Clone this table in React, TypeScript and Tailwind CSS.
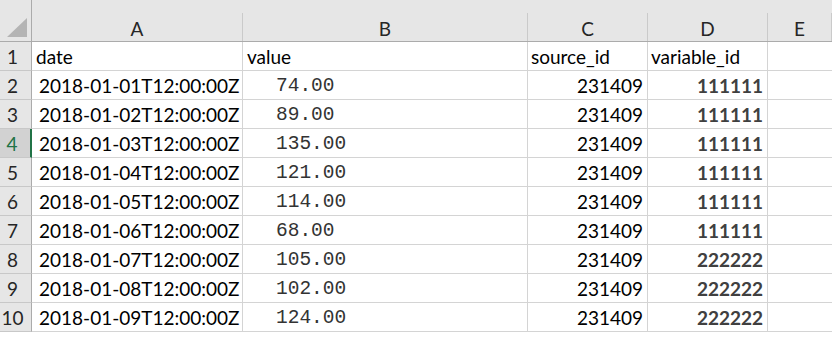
import React from 'react'

type Row = { date: string; value: string; source: string; variable: string }

const rows: Row[] = [
  { date: '2018-01-01T12:00:00Z', value: '74.00', source: '231409', variable: '111111' },
  { date: '2018-01-02T12:00:00Z', value: '89.00', source: '231409', variable: '111111' },
  { date: '2018-01-03T12:00:00Z', value: '135.00', source: '231409', variable: '111111' },
  { date: '2018-01-04T12:00:00Z', value: '121.00', source: '231409', variable: '111111' },
  { date: '2018-01-05T12:00:00Z', value: '114.00', source: '231409', variable: '111111' },
  { date: '2018-01-06T12:00:00Z', value: '68.00', source: '231409', variable: '111111' },
  { date: '2018-01-07T12:00:00Z', value: '105.00', source: '231409', variable: '222222' },
  { date: '2018-01-08T12:00:00Z', value: '102.00', source: '231409', variable: '222222' },
  { date: '2018-01-09T12:00:00Z', value: '124.00', source: '231409', variable: '222222' },
]

const cols = ['A', 'B', 'C', 'D', 'E']
const SELECTED_ROW = 4

function RowHeader({ n }: { n: number }) {
  const selected = n === SELECTED_ROW
  return (
    <div
      className={`h-[29px] flex items-center justify-center pr-[6px] pt-[1px] border-b border-[#c8c8c8] ${
        selected
          ? 'bg-[#d2d2d2] text-[#217346] border-r-2 border-r-[#217346]'
          : 'bg-[#e6e6e6] text-[#262626] border-r border-r-[#ababab]'
      }`}
    >
      {n}
    </div>
  )
}

// grid cell, text sits a touch low like Excel's bottom alignment
const cell = 'h-[29px] flex items-center pt-[1px] border-r border-b border-[#d4d4d4] whitespace-nowrap overflow-hidden'

export default function App() {
  return (
    <div className="w-[832px] h-[337px] overflow-hidden bg-white text-black font-['Lato',sans-serif] text-[19px] leading-none">
      <div className="grid grid-cols-[32px_211px_285px_120px_120px_1fr]">
        {/* corner */}
        <div className="h-[42px] bg-[#e6e6e6] border-r border-b border-[#ababab] flex items-end justify-end pr-[4px] pb-[4px]">
          <svg width="20" height="19" viewBox="0 0 20 19">
            <polygon points="20,0 20,19 0,19" fill="#b4b4b4" />
          </svg>
        </div>

        {/* column letters */}
        {cols.map(c => (
          <div key={c} className="h-[42px] bg-[#e6e6e6] border-b border-[#ababab] pt-[13px]">
            <div className="h-full flex items-center justify-center pt-[3px] border-r border-[#cacaca] text-[#262626]">
              {c}
            </div>
          </div>
        ))}

        {/* row 1: field names */}
        <RowHeader n={1} />
        <div className={`${cell} pl-[4px]`}>date</div>
        <div className={`${cell} pl-[4px]`}>value</div>
        <div className={`${cell} pl-[3px]`}>source_id</div>
        <div className={`${cell} pl-[3px]`}>variable_id</div>
        <div className={`${cell} border-r-0`} />

        {rows.map((r, i) => (
          <React.Fragment key={r.date}>
            <RowHeader n={i + 2} />
            <div className={`${cell} pl-[7px]`}>{r.date}</div>
            <div className={`${cell} pl-[33px] pt-[4px] font-['Liberation_Mono',monospace] text-[19.5px] text-[#333333]`}>{r.value}</div>
            <div className={`${cell} justify-end pr-[4px]`}>{r.source}</div>
            <div className={`${cell} justify-end pr-[4px] font-bold text-[#404040]`}>{r.variable}</div>
            <div className={`${cell} border-r-0`} />
          </React.Fragment>
        ))}
      </div>
    </div>
  )
}
